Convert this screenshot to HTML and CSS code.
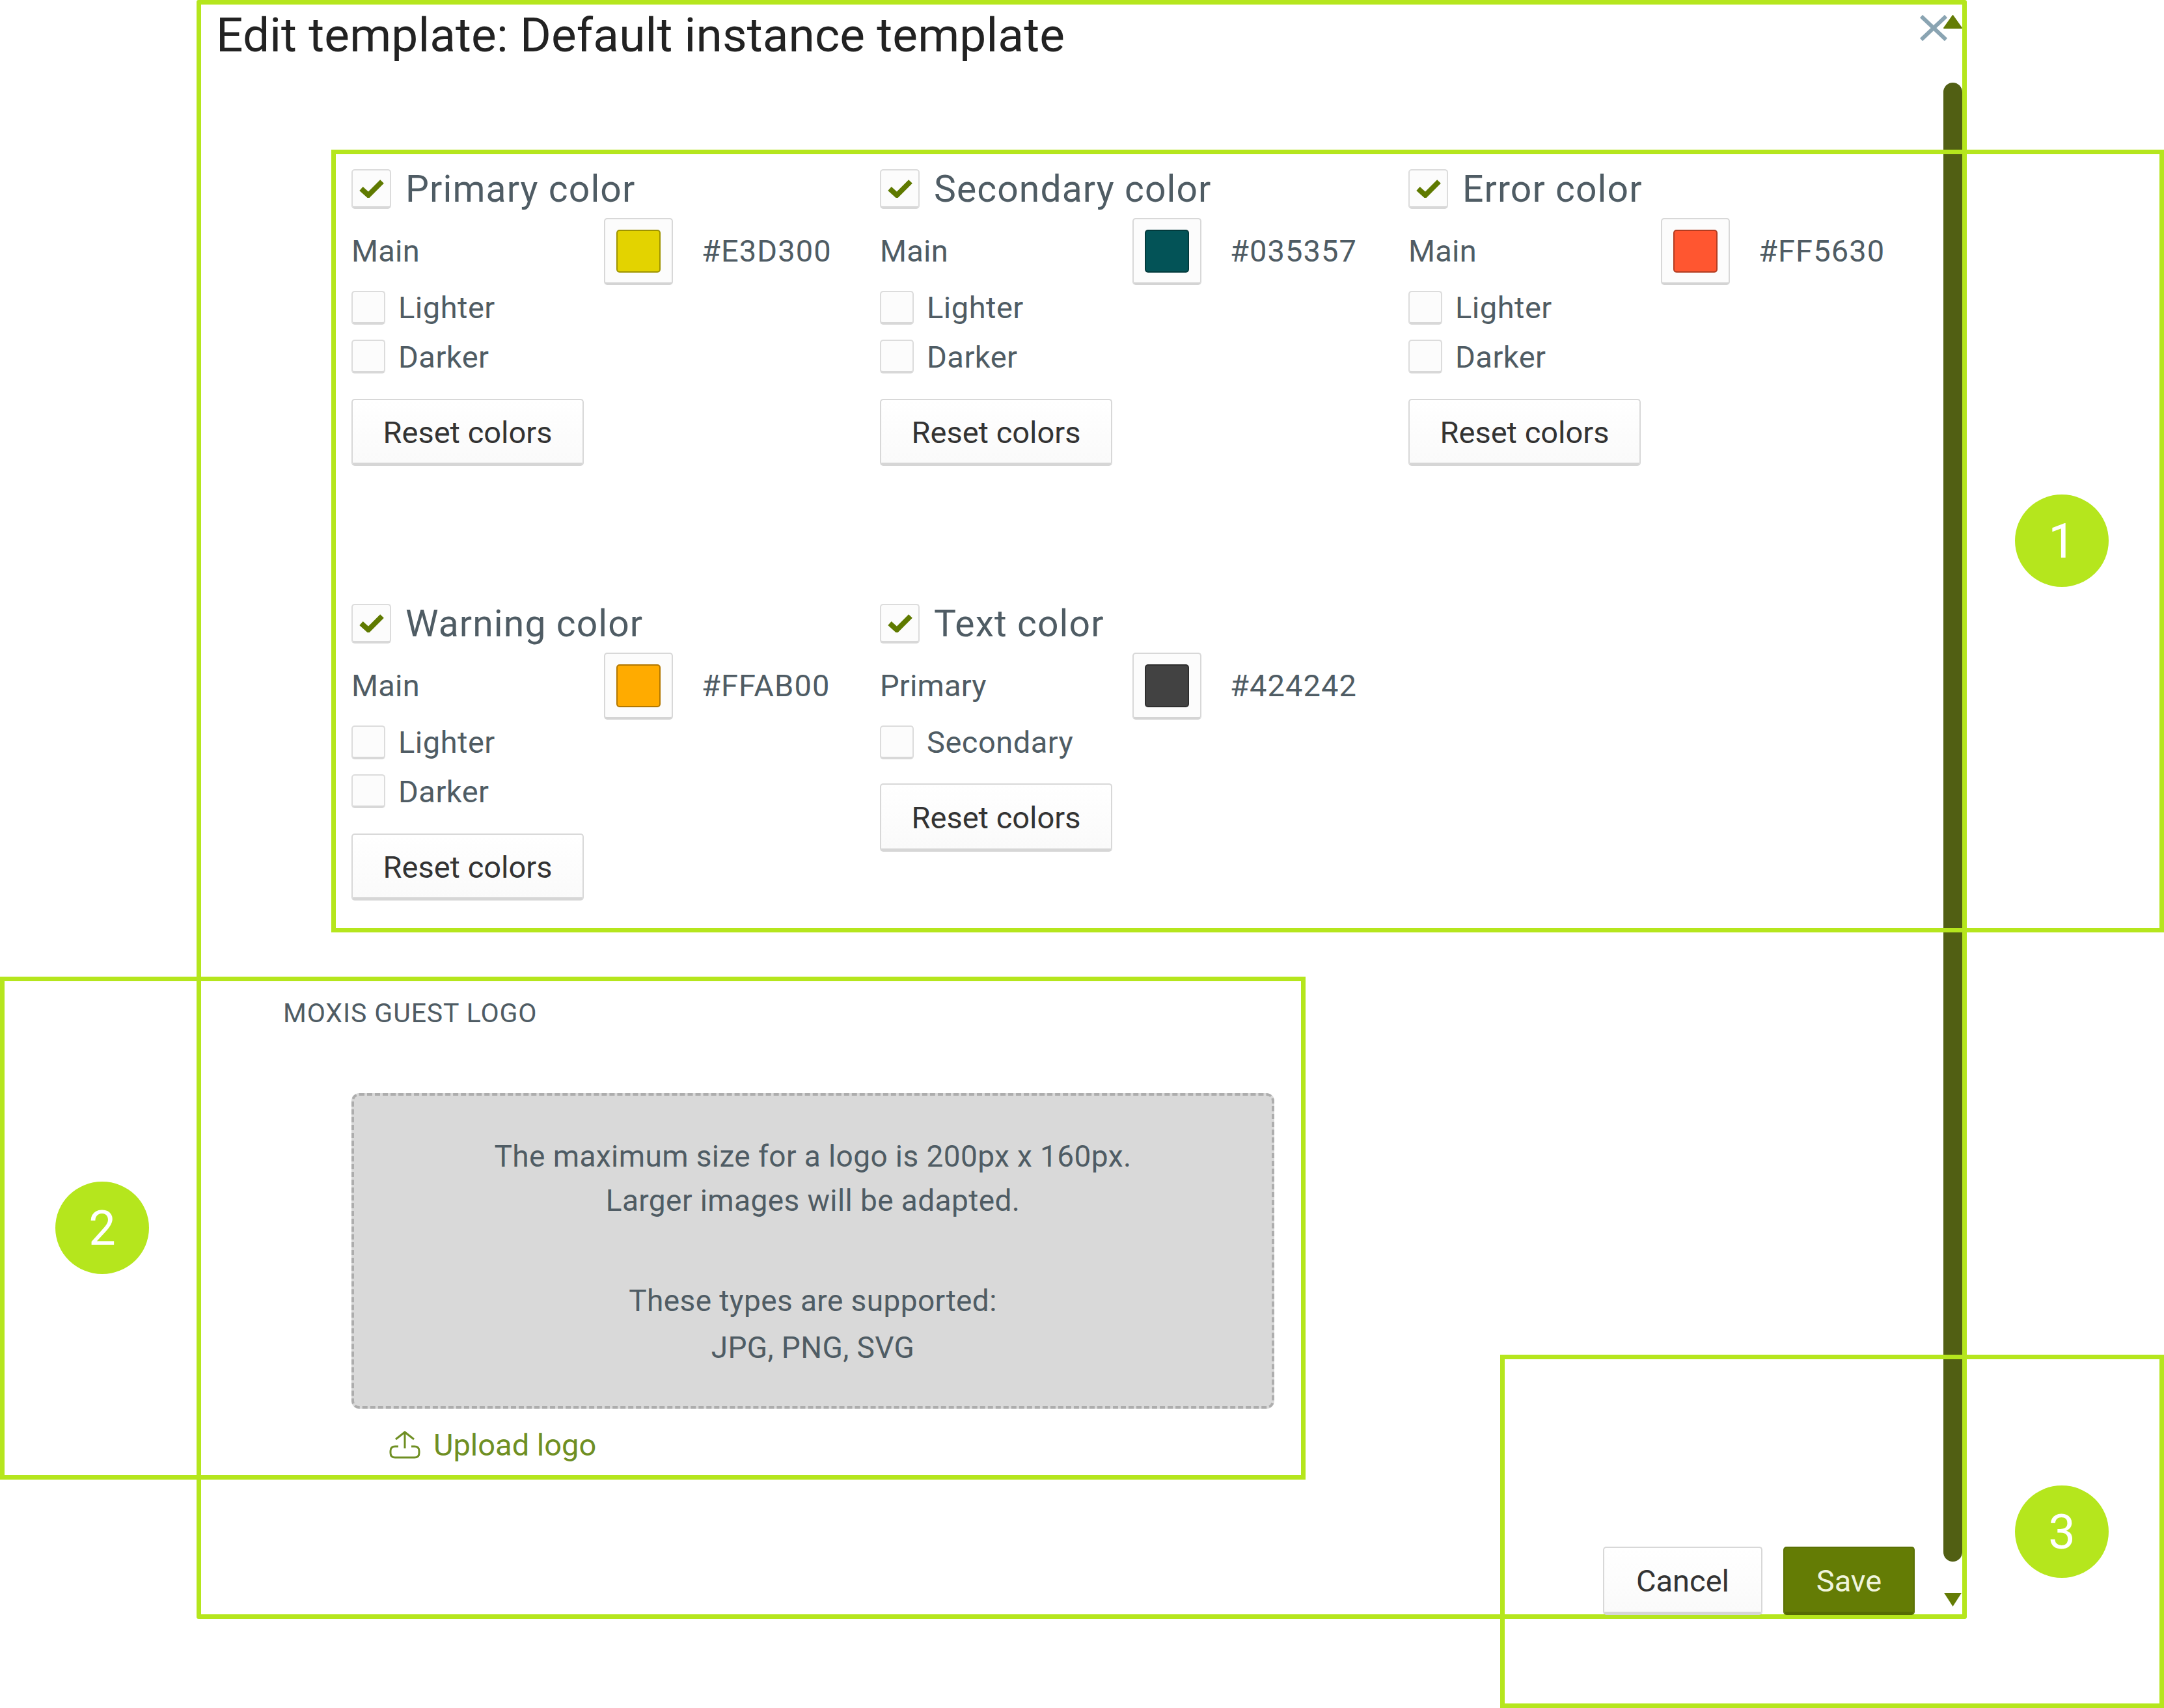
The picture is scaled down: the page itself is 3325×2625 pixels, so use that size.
FILE: index.html
```html
<!DOCTYPE html>
<html lang="en">
<head>
<meta charset="utf-8">
<title>Edit template</title>
<link rel="stylesheet" href="styles.css">
</head>
<body>
<svg class="defs" width="0" height="0" aria-hidden="true">
  <symbol id="check" viewBox="0 0 38 28"><path d="M3 14 L14 24 L35 3" fill="none" stroke="#5f7a00" stroke-width="8"/></symbol>
</svg>
<main class="dialog">
  <h1 class="title">Edit template: Default instance template</h1>
  <svg class="close" viewBox="0 0 44 40"><path d="M3 2 L41 38 M41 2 L3 38" stroke="#8aa4b2" stroke-width="6" fill="none"/></svg>
  <div class="scrollbar">
    <svg class="arrow" viewBox="0 0 29 21"><path d="M14.5 1 L28 20 H1 Z" fill="#647c05" stroke="#647c05" stroke-width="2" stroke-linejoin="round"/></svg>
    <div class="thumb"></div>
    <svg class="arrow arrow-down" viewBox="0 0 29 23"><path d="M1 1 H28 L14.5 22 Z" fill="#647c05"/></svg>
  </div>

  <div class="groups">
    <section class="group">
      <div class="head"><span class="box box-lg"><svg class="tick"><use href="#check"/></svg></span><span class="head-label">Primary color</span></div>
      <div class="main-row"><span class="row-label">Main</span><span class="swatch-btn"><span class="swatch c-primary"></span></span><span class="hex">#E3D300</span></div>
      <div class="opt"><span class="box"></span><span>Lighter</span></div>
      <div class="opt opt-next"><span class="box"></span><span>Darker</span></div>
      <button class="btn reset">Reset colors</button>
    </section>
    <section class="group">
      <div class="head"><span class="box box-lg"><svg class="tick"><use href="#check"/></svg></span><span class="head-label">Secondary color</span></div>
      <div class="main-row"><span class="row-label">Main</span><span class="swatch-btn"><span class="swatch c-secondary"></span></span><span class="hex">#035357</span></div>
      <div class="opt"><span class="box"></span><span>Lighter</span></div>
      <div class="opt opt-next"><span class="box"></span><span>Darker</span></div>
      <button class="btn reset">Reset colors</button>
    </section>
    <section class="group">
      <div class="head"><span class="box box-lg"><svg class="tick"><use href="#check"/></svg></span><span class="head-label">Error color</span></div>
      <div class="main-row"><span class="row-label">Main</span><span class="swatch-btn"><span class="swatch c-error"></span></span><span class="hex">#FF5630</span></div>
      <div class="opt"><span class="box"></span><span>Lighter</span></div>
      <div class="opt opt-next"><span class="box"></span><span>Darker</span></div>
      <button class="btn reset">Reset colors</button>
    </section>
    <section class="group">
      <div class="head"><span class="box box-lg"><svg class="tick"><use href="#check"/></svg></span><span class="head-label">Warning color</span></div>
      <div class="main-row"><span class="row-label">Main</span><span class="swatch-btn"><span class="swatch c-warning"></span></span><span class="hex">#FFAB00</span></div>
      <div class="opt"><span class="box"></span><span>Lighter</span></div>
      <div class="opt opt-next"><span class="box"></span><span>Darker</span></div>
      <button class="btn reset">Reset colors</button>
    </section>
    <section class="group">
      <div class="head"><span class="box box-lg"><svg class="tick"><use href="#check"/></svg></span><span class="head-label">Text color</span></div>
      <div class="main-row"><span class="row-label">Primary</span><span class="swatch-btn"><span class="swatch c-text"></span></span><span class="hex">#424242</span></div>
      <div class="opt"><span class="box"></span><span>Secondary</span></div>
      <button class="btn reset reset-tight">Reset colors</button>
    </section>
  </div>

  <h2 class="logo-title">MOXIS GUEST LOGO</h2>
  <div class="dropzone">
    <p class="drop-a">The maximum size for a logo is 200px x 160px.<br>Larger images will be adapted.</p>
    <p class="drop-b">These types are supported:<br>JPG, PNG, SVG</p>
  </div>
  <a class="upload">
    <svg class="upload-icon" viewBox="0 0 48 43"><path d="M24 3 V27 M10 13 L24 2 L38 13 M14 24 H9 Q2 24 2 31 V34 Q2 41 9 41 H39 Q46 41 46 34 V31 Q46 24 39 24 H34" fill="none" stroke="#6f8f23" stroke-width="3"/></svg>
    <span>Upload logo</span>
  </a>
  <footer class="actions">
    <button class="btn cancel">Cancel</button>
    <button class="btn save">Save</button>
  </footer>
</main>

<div class="frame frame-1"></div>
<div class="frame frame-2"></div>
<div class="frame frame-3"></div>
<div class="badge badge-1">1</div>
<div class="badge badge-2">2</div>
<div class="badge badge-3">3</div>
</body>
</html>
```
FILE: styles.css
```css
* { box-sizing: border-box; }
html, body { margin: 0; padding: 0; }
body {
  position: relative;
  width: 3325px;
  height: 2625px;
  overflow: hidden;
  background: #fff;
  font-family: Roboto, "Liberation Sans", sans-serif;
  color: #4f5c64;
}
.defs { position: absolute; }

.dialog {
  position: relative;
  display: flex;
  flex-direction: column;
  margin-left: 302px;
  width: 2720px;
  height: 2488px;
  border: 7px solid #b5e61d;
  border-radius: 3px;
}
.title {
  margin: 0;
  padding: 2px 0 0 23px;
  height: 90px;
  font-size: 73px;
  line-height: 90px;
  font-weight: 400;
  letter-spacing: .12px;
  color: #222;
}
.close {
  position: absolute;
  top: 16px;
  right: 22px;
  width: 44px;
  height: 40px;
}
.scrollbar {
  position: absolute;
  top: 16px;
  right: 0;
  bottom: 11px;
  width: 29px;
  display: flex;
  flex-direction: column;
}
.arrow { width: 29px; height: 21px; flex: none; }
.arrow-down { height: 23px; }
.thumb {
  flex: 1;
  margin: 83px 0 47px;
  background: #515f13;
  border-radius: 15px;
}

.groups {
  display: grid;
  grid-template-columns: repeat(3, 812px);
  grid-template-rows: 668px auto;
  margin: 163px 0 0 231px;
}
.group { display: flex; flex-direction: column; align-items: flex-start; }
.head { display: flex; align-items: center; gap: 22px; height: 61px; }
.head-label { font-size: 57px; line-height: 61px; letter-spacing: 1.1px; }
.box {
  display: flex;
  align-items: center;
  justify-content: center;
  flex: none;
  width: 52px;
  height: 52px;
  background: #fcfcfc;
  border: 2px solid #dcdcdc;
  border-bottom: 4px solid #d8d8d8;
  border-radius: 5px;
}
.box-lg { width: 61px; height: 61px; }
.tick { width: 38px; height: 28px; }

.main-row {
  display: grid;
  grid-template-columns: 388px 106px auto;
  align-items: center;
  margin-top: 14px;
  height: 103px;
  font-size: 47px;
}
.row-label { padding-bottom: 2px; letter-spacing: .2px; }
.swatch-btn {
  display: flex;
  align-items: center;
  justify-content: center;
  width: 106px;
  height: 103px;
  background: #fcfcfc;
  border: 2px solid #d8d8d8;
  border-bottom: 4px solid #d4d4d4;
  border-radius: 5px;
}
.swatch {
  width: 68px;
  height: 66px;
  border: 2px solid rgba(0, 0, 0, .3);
  border-radius: 5px;
}
.c-primary { background: #e3d300; }
.c-secondary { background: #035357; }
.c-error { background: #ff5630; }
.c-warning { background: #ffab00; }
.c-text { background: #424242; }
.hex { margin-left: 44px; padding-bottom: 3px; letter-spacing: 1.1px; }

.opt {
  display: flex;
  align-items: center;
  gap: 20px;
  margin-top: 8px;
  height: 52px;
  padding-top: 1px;
  font-size: 47px;
  letter-spacing: .5px;
}
.opt-next { margin-top: 23px; padding-top: 2px; }

.btn {
  font-family: inherit;
  font-size: 47px;
  color: #333;
  background: linear-gradient(#fff, #fafafa);
  border: 2px solid #d8d8d8;
  border-bottom: 5px solid #d6d6d6;
  border-radius: 5px;
  padding: 3px 0 0;
}
.reset { margin-top: 40px; width: 357px; height: 103px; }
.reset-tight { margin-top: 38px; height: 105px; }

.logo-title {
  margin: 143px 0 0;
  padding-left: 126px;
  font-size: 41px;
  line-height: 60px;
  font-weight: 400;
  letter-spacing: .9px;
}
.dropzone {
  margin: 93px 0 0 231px;
  width: 1418px;
  height: 485px;
  padding-top: 59px;
  background: #d9d9d9;
  border: 4px dashed #adadad;
  border-radius: 12px;
  text-align: center;
  font-size: 46px;
  letter-spacing: .4px;
}
.dropzone p { margin: 0; }
.drop-a { line-height: 68px; }
.dropzone .drop-b { margin-top: 84px; line-height: 72px; }

.upload {
  display: flex;
  align-items: center;
  gap: 20px;
  margin: 25px 0 0 289px;
  height: 60px;
  font-size: 47px;
  color: #6f8f23;
}
.upload-icon { width: 48px; height: 43px; }

.actions {
  display: flex;
  justify-content: flex-end;
  gap: 32px;
  margin-top: auto;
  padding-right: 73px;
  margin-bottom: -1px;
}
.cancel { width: 245px; height: 105px; }
.save {
  width: 202px;
  height: 105px;
  background: #647c05;
  color: #f0f5dc;
  border: 2px solid #5a7004;
  border-bottom: 5px solid #566b04;
}

.frame { position: absolute; border: 7px solid #b5e61d; }
.frame-1 { left: 509px; top: 230px; width: 2816px; height: 1203px; }
.frame-2 { left: 0; top: 1501px; width: 2006px; height: 773px; }
.frame-3 { left: 2305px; top: 2082px; width: 1020px; height: 543px; }

.badge {
  position: absolute;
  display: flex;
  align-items: center;
  justify-content: center;
  width: 144px;
  height: 142px;
  border-radius: 50%;
  background: #b5e61d;
  color: #fff;
  font-size: 74px;
  font-weight: 400;
}
.badge-1 { left: 3096px; top: 760px; }
.badge-2 { left: 85px; top: 1816px; }
.badge-3 { left: 3096px; top: 2283px; }
```
